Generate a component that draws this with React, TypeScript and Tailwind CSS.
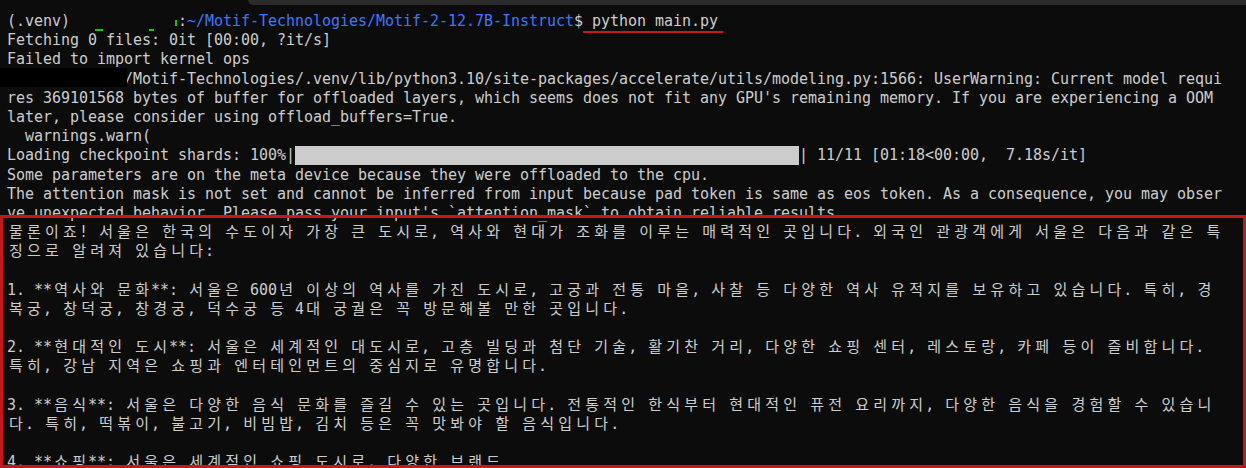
import React from 'react';

const MONO = { fontFamily: '"DejaVu Sans Mono", "Noto Sans CJK KR", monospace' };

function isWide(ch: string) {
    const c = ch.codePointAt(0) ?? 0;
    return (c >= 0x1100 && c <= 0x11ff) || (c >= 0x3130 && c <= 0x318f) || (c >= 0xac00 && c <= 0xd7af);
}

// korean glyphs take two terminal cells (2 x 9px)
function Cells({ text }: { text: string }) {
    const parts: React.ReactNode[] = [];
    let buf = '';
    Array.from(text).forEach((ch, i) => {
        if (isWide(ch)) {
            if (buf) {
                parts.push(<span key={'n' + i}>{buf}</span>);
                buf = '';
            }
            parts.push(
                <span key={i} className="inline-block w-[18px] text-center">
                    {ch}
                </span>
            );
        } else {
            buf += ch;
        }
    });
    if (buf) parts.push(<span key="end">{buf}</span>);
    return <>{parts}</>;
}

function Line({ children }: { children?: React.ReactNode }) {
    return <div className="h-[19.2px] shrink-0 whitespace-pre leading-[19.2px]">{children}</div>;
}

const korean = [
    '물론이죠! 서울은 한국의 수도이자 가장 큰 도시로, 역사와 현대가 조화를 이루는 매력적인 곳입니다. 외국인 관광객에게 서울은 다음과 같은 특',
    '징으로 알려져 있습니다:',
    '',
    '1. **역사와 문화**: 서울은 600년 이상의 역사를 가진 도시로, 고궁과 전통 마을, 사찰 등 다양한 역사 유적지를 보유하고 있습니다. 특히, 경',
    '복궁, 창덕궁, 창경궁, 덕수궁 등 4대 궁궐은 꼭 방문해볼 만한 곳입니다.',
    '',
    '2. **현대적인 도시**: 서울은 세계적인 대도시로, 고층 빌딩과 첨단 기술, 활기찬 거리, 다양한 쇼핑 센터, 레스토랑, 카페 등이 즐비합니다.',
    '특히, 강남 지역은 쇼핑과 엔터테인먼트의 중심지로 유명합니다.',
    '',
    '3. **음식**: 서울은 다양한 음식 문화를 즐길 수 있는 곳입니다. 전통적인 한식부터 현대적인 퓨전 요리까지, 다양한 음식을 경험할 수 있습니',
    '다. 특히, 떡볶이, 불고기, 비빔밥, 김치 등은 꼭 맛봐야 할 음식입니다.',
    '',
    '4. **쇼핑**: 서울은 세계적인 쇼핑 도시로, 다양한 브랜드',
];

export default function App() {
    return (
        <div className="relative flex h-[468px] w-full flex-col overflow-hidden bg-[#0c0c0c] text-[15px] tracking-[-0.03px] text-[#cccccc]" style={MONO}>
            <div className="ml-[248px] h-[5px] shrink-0 rounded-bl-[5px] bg-[#2b2b2b]" />
            <div className="flex flex-col pl-[7px] pt-[7px]">
                <Line>
                    (.venv){' '}
                    <span className="relative inline-block h-[19px] w-[99px] align-top">
                        <span className="absolute left-[16px] top-[17px] h-[2px] w-[8px] bg-[#16c60c]" />
                        <span className="absolute left-[70px] top-[17px] h-[2px] w-[5px] bg-[#16c60c]" />
                        <span className="absolute right-[1px] top-[8px] h-[6px] w-[2px] bg-[#16c60c]" />
                    </span>
                    :<span className="text-[#3b78ff]">~/Motif-Technologies/Motif-2-12.7B-Instruct</span>$
                    <span className="relative">
                        {' python main.py'}
                        <span className="absolute bottom-[-3px] left-0 right-[-5px] h-[2px] bg-[#c8161d]" />
                    </span>
                </Line>
                <Line>Fetching 0 files: 0it [00:00, ?it/s]</Line>
                <Line>Failed to import kernel ops</Line>
                <Line>
                    {'             /Motif-Technologies/.venv/lib/python3.10/site-packages/accelerate/utils/modeling.py:1566: UserWarning: Current model requi'}
                </Line>
                <Line>
                    res 369101568 bytes of buffer for offloaded layers, which seems does not fit any GPU's remaining memory. If you are experiencing a OOM
                </Line>
                <Line>later, please consider using offload_buffers=True.</Line>
                <Line>{'  warnings.warn('}</Line>
                <Line>
                    Loading checkpoint shards: 100%|
                    <span className="inline-block h-[19px] w-[504px] bg-[#cccccc] align-top" />
                    {'| 11/11 [01:18<00:00,  7.18s/it]'}
                </Line>
                <Line>Some parameters are on the meta device because they were offloaded to the cpu.</Line>
                <Line>
                    The attention mask is not set and cannot be inferred from input because pad token is same as eos token. As a consequence, you may obser
                </Line>
                <Line>ve unexpected behavior. Please pass your input's `attention_mask` to obtain reliable results.</Line>
                {korean.map((t, i) => (
                    <Line key={i}>
                        <Cells text={t} />
                    </Line>
                ))}
            </div>

            {/* redaction over the home path */}
            <div className="absolute left-0 top-[68px] h-[19px] w-[127px] bg-black" />

            {/* annotation box around the model answer */}
            <div className="pointer-events-none absolute left-0 top-[215px] h-[253px] w-[1246px] border-[3px] border-[#c8161d]" />
        </div>
    );
}
